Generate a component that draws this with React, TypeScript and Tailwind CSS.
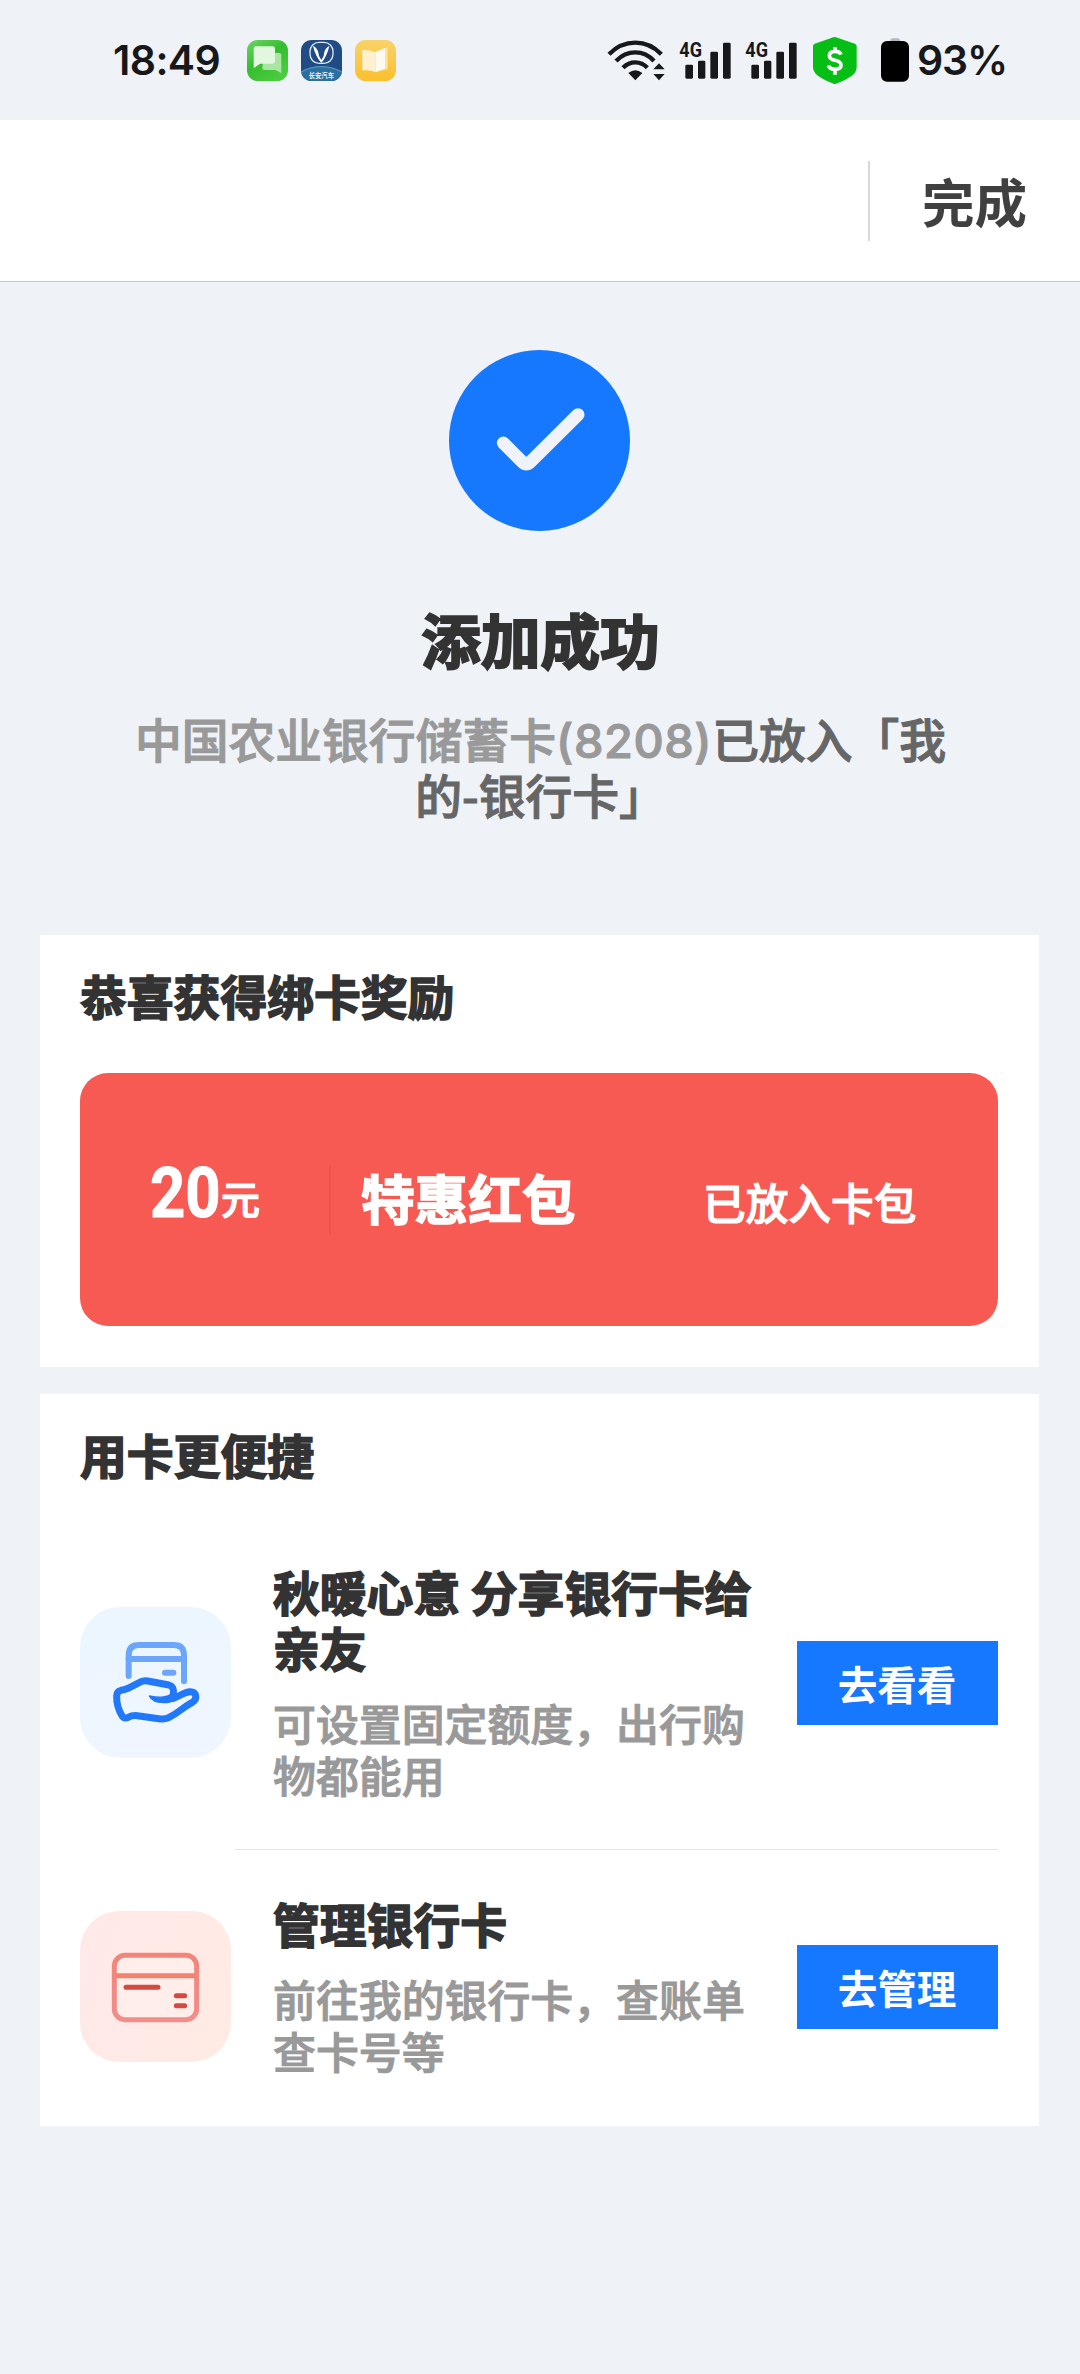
import type { ReactNode } from 'react';

const MessagesIcon = () => (
  <svg className="size-[41px]" viewBox="443 62 123 123">
    <defs>
      <linearGradient id="msg" x1="0" y1="0" x2="0.7" y2="1">
        <stop offset="0" stopColor="#6ad862" />
        <stop offset="0.5" stopColor="#35bd30" />
        <stop offset="1" stopColor="#4ccc3e" />
      </linearGradient>
    </defs>
    <rect x="443" y="62" width="123" height="123" rx="32" fill="url(#msg)" />
    <path d="M496 101h44q6 0 6 6v55l-17-10h-33q-7 0-7-7z" fill="#a9e5a3" />
    <path d="M469 81h51q7 0 7 7v38q0 7-7 7h-38l-19 14V88q0-7 6-7z" fill="#e3f7e0" />
  </svg>
);

const CarIcon = () => (
  <svg className="size-[41px]" viewBox="605 62 123 123">
    <defs>
      <clipPath id="carClip">
        <rect x="605" y="62" width="123" height="123" rx="32" />
      </clipPath>
    </defs>
    <g clipPath="url(#carClip)">
      <rect x="605" y="62" width="123" height="123" fill="#214b84" />
      <path d="M605 160q60-34 123 0v25H605z" fill="#2c6f9f" />
      <path d="M605 158q60-32 123 0" fill="none" stroke="#4f9bbd" strokeWidth="4" />
      <rect x="632" y="69" width="69" height="63" rx="27" fill="none" stroke="#dce9f5" strokeWidth="4" />
      <path d="M641 80c4 20 14 38 25 51 11-13 20-31 24-51-9 4-15 12-17 30l-7 12-7-12c-2-18-8-26-18-30z" fill="#fff" />
      <text x="666" y="175" textAnchor="middle" fill="#e8f1fa" className="font-['Noto_Sans_CJK_SC',sans-serif] text-[19px] font-bold">长安汽车</text>
    </g>
  </svg>
);

const BookIcon = () => (
  <svg className="size-[41px]" viewBox="767 62 123 123">
    <defs>
      <linearGradient id="book" x1="0" y1="0" x2="0" y2="1">
        <stop offset="0" stopColor="#f8d269" />
        <stop offset="1" stopColor="#fac02c" />
      </linearGradient>
    </defs>
    <rect x="767" y="62" width="123" height="123" rx="32" fill="url(#book)" />
    <path d="M829 96l36-12v66l-36 8z" fill="#fbe3a0" />
    <path d="M789 91q22 0 40 8v59q-18-7-40-5z" fill="#fdf1cf" />
    <path d="M829 99l28-13v61l-28 11z" fill="#fffaf0" />
  </svg>
);

const WifiIcon = () => (
  <svg className="h-[41px] w-[58px]" viewBox="50 58 174 123" fill="none">
    <g stroke="#17181a" strokeWidth="13">
      <path d="M56 101q34-35 79-35t78 35" />
      <path d="M77 121q25-26 58-26t56 26" />
      <path d="M98 141q16-16 37-16t36 16" />
    </g>
    <path d="M114 157q21-17 42 0l-21 22z" fill="#17181a" />
    <path d="M189 146l17-18 17 18zM189 160h34l-17 19z" fill="#17181a" />
  </svg>
);

const SignalIcon = () => (
  <svg className="h-[41px] w-[52px] overflow-visible" viewBox="266 58 156 123" fill="#17181a">
    <text x="267" y="110" textLength="68" lengthAdjust="spacingAndGlyphs" className="font-['Roboto',sans-serif] text-[62px] font-bold">4G</text>
    <rect x="285" y="132" width="23" height="42" rx="4" />
    <rect x="323" y="120" width="22" height="54" rx="4" />
    <rect x="360" y="93" width="23" height="81" rx="4" />
    <rect x="398" y="66" width="23" height="108" rx="4" />
  </svg>
);

const ShieldIcon = () => (
  <svg className="h-[47px] w-[44px]" viewBox="668 48 132 141">
    <path d="M725 50q8-4 16 0l53 18q5 2 5 8v62q0 14-12 24-14 12-46 25-8 4-15 0-32-13-46-25-12-10-12-24V76q0-6 5-8z" fill="#06be14" />
    <path d="M752 101q-4-10-18-10-17 0-17 13 0 10 17 14 18 4 18 14 0 13-18 13-16 0-20-12M734 78v14M734 144v17" fill="none" stroke="#fff" strokeWidth="11" />
  </svg>
);

const BatteryIcon = () => (
  <svg className="h-[44px] w-[28px]" viewBox="873 50 84 132">
    <path d="M900 62q0-11 8-11h15q8 0 8 11z" fill="#b5b8bd" />
    <rect x="873" y="59" width="84" height="122" rx="18" fill="#000" />
  </svg>
);

const HandCardIcon = () => (
  <svg className="size-[151px] shrink-0" viewBox="150 681 453 453" fill="none" strokeLinecap="round" strokeLinejoin="round">
    <defs>
      <linearGradient id="tileBlue" x1="0" y1="0" x2="0.3" y2="1">
        <stop offset="0" stopColor="#ebf6ff" />
        <stop offset="1" stopColor="#f0f6ff" />
      </linearGradient>
    </defs>
    <rect x="150" y="681" width="453" height="453" rx="122" fill="url(#tileBlue)" />
    <g stroke="#6ba6fb" strokeWidth="18">
      <path d="M296 888v-62q0-31 31-31h104q31 0 31 31v78" />
      <path d="M296 837h166" />
      <path d="M405 878h25" />
    </g>
    <path
      d="M430 944Q434 920 417 915L353 903Q340 901 329 907L294 925Q282 930 273 931Q261 933 260 947Q259 981 277 1009Q284 1017 295 1012Q305 1006 322 1007L392 1017Q406 1018 416 1013C441 1001 461 981 487 967C504 956 499 934 480 935C461 936 450 949 430 955"
      stroke="#2178fa"
      strokeWidth="21"
    />
    <path d="M358 948q25 5 42 3 16-2 24-9l12 0 0 14q-12 12-36 12-32 0-42-20z" fill="#2178fa" stroke="#2178fa" strokeWidth="4" />
  </svg>
);

const ManageCardIcon = () => (
  <svg className="size-[151px] shrink-0" viewBox="150 242 453 453" fill="none" strokeLinecap="round">
    <defs>
      <linearGradient id="tileRed" x1="0" y1="0" x2="1" y2="0.3">
        <stop offset="0" stopColor="#ffe9e9" />
        <stop offset="1" stopColor="#ffeae4" />
      </linearGradient>
      <linearGradient id="cardLine" x1="0" y1="0" x2="0" y2="1">
        <stop offset="0" stopColor="#f3857a" />
        <stop offset="1" stopColor="#f28d8a" />
      </linearGradient>
    </defs>
    <rect x="150" y="242" width="453" height="453" rx="118" fill="url(#tileRed)" />
    <rect x="253" y="375" width="247" height="193" rx="32" fill="#ffeee9" stroke="url(#cardLine)" strokeWidth="15" />
    <path d="M255 436h243" stroke="#f3826f" strokeWidth="15" strokeLinecap="butt" />
    <path d="M288 471h96M439 496h25M439 526h25" stroke="#d24a40" strokeWidth="15" />
  </svg>
);

const SectionTitle = ({ children }: { children: ReactNode }) => (
  <h2 className="text-[46.8px] leading-[56px] font-bold text-[#333] [-webkit-text-stroke:1.6px_#333]">{children}</h2>
);

type ServiceProps = { icon: ReactNode; title: ReactNode; desc: ReactNode; action: string };

const Service = ({ icon, title, desc, action }: ServiceProps) => (
  <div className="flex items-center">
    {icon}
    <div className="ml-[42px] w-[524px] shrink-0 pb-[2px] whitespace-nowrap">
      <SectionTitle>{title}</SectionTitle>
      <p className="mt-[21px] text-[42.9px] leading-[52px] font-medium text-[#999] [-webkit-text-stroke:1px_#999]">{desc}</p>
    </div>
    <button className="h-[84px] w-[201px] shrink-0 bg-[#1677ff] pr-px text-[39.6px] leading-[82px] font-bold text-white">{action}</button>
  </div>
);

export default function App() {
  return (
    <div className="h-[2374px] w-[1080px] overflow-hidden bg-[#eff3f8] font-['Noto_Sans_CJK_SC',sans-serif]">
      <div className="flex h-[120px] items-center justify-between pr-[74px] pl-[113px] font-['Inter',sans-serif] text-[#17181a]">
        <div className="flex items-center">
          <span className="w-[134px] text-[41px] leading-[41px] font-semibold tracking-[-0.6px]">18:49</span>
          <div className="flex gap-[13px]">
            <MessagesIcon />
            <CarIcon />
            <BookIcon />
          </div>
        </div>
        <div className="flex items-center">
          <WifiIcon />
          <span className="ml-[14px] flex gap-[14px]">
            <SignalIcon />
            <SignalIcon />
          </span>
          <span className="ml-4">
            <ShieldIcon />
          </span>
          <span className="ml-[24px]">
            <BatteryIcon />
          </span>
          <span className="ml-[8px] w-[89px] text-[41px] leading-[41px] font-semibold tracking-[-1.2px] whitespace-nowrap">93%</span>
        </div>
      </div>

      <header className="flex h-[162px] items-center justify-end border-b border-[#c3cad0] bg-white pr-[52px]">
        <div className="mr-[52px] h-20 w-[2px] bg-[#d9d9d9]" />
        <button className="w-[106px] pb-[2px] text-left text-[52.5px] leading-[60px] font-bold whitespace-nowrap text-[#404040]">完成</button>
      </header>

      <section className="flex flex-col items-center pt-[68px]">
        <svg className="mr-[2px] size-[181px]" viewBox="148 59 543 543" fill="none">
          <circle cx="419.500" cy="330.500" r="271.500" fill="#1677ff" />
          <path d="M311 338l57 57q12 12 24 0L535 253" stroke="#eff3f8" strokeWidth="39" strokeLinecap="round" />
        </svg>
        <h1 className="mt-[71px] pl-px text-[59.6px] leading-[72px] font-bold text-[#333] [-webkit-text-stroke:2.2px_#333]">添加成功</h1>
        <p className="mt-[36px] pl-px text-center text-[46.8px] leading-[56px] font-medium whitespace-nowrap text-[#666] [-webkit-text-stroke:1.1px_#666]">
          <span className="text-[#999] [-webkit-text-stroke:1.1px_#999]">
            中国农业银行储蓄卡<span className="font-['Inter',sans-serif] leading-none tracking-[0.6px]">(8208)</span>
          </span>
          已放入「我
          <br />
          的-银行卡」
        </p>
      </section>

      <section className="mx-10 mt-[113px] h-[432px] w-[999px] bg-white px-10 pt-[32px]">
        <SectionTitle>恭喜获得绑卡奖励</SectionTitle>
        <div className="mt-[50px] flex h-[253px] w-[918px] items-center rounded-[28px] bg-[#f75a52] text-white">
          <div className="flex w-[249px] items-baseline pb-[13px] pl-[70px]">
            <span className="w-[71px] origin-left scale-x-[0.88] font-['Roboto',sans-serif] text-[70px] leading-none font-bold [-webkit-text-stroke:1px_white]">20</span>
            <span className="relative -top-[3px] text-[39px] leading-none font-medium [-webkit-text-stroke:1.1px_white]">元</span>
          </div>
          <div className="h-[68px] w-[2px] bg-[#ee524b]" />
          <span className="ml-[30px] w-[342px] pb-[5px] text-[53.6px] leading-[64px] font-bold [-webkit-text-stroke:1.6px_white]">特惠红包</span>
          <span className="pt-[2px] text-[42.7px] leading-[52px] font-medium [-webkit-text-stroke:1.1px_white]">已放入卡包</span>
        </div>
      </section>

      <section className="mx-10 mt-[27px] h-[732px] w-[999px] bg-white pt-[32px] pl-10">
        <SectionTitle>用卡更便捷</SectionTitle>
        <div className="mt-[81px]">
          <Service
            icon={<HandCardIcon />}
            title={<>秋暖心意 分享银行卡给<br />亲友</>}
            desc={<>可设置固定额度，出行购<br />物都能用</>}
            action="去看看"
          />
        </div>
        <div className="mt-[47px] ml-[155px] h-px w-[763px] bg-[#e5e5e5]" />
        <div className="mt-[45px]">
          <Service
            icon={<ManageCardIcon />}
            title="管理银行卡"
            desc={<>前往我的银行卡，查账单<br />查卡号等</>}
            action="去管理"
          />
        </div>
      </section>
    </div>
  );
}
